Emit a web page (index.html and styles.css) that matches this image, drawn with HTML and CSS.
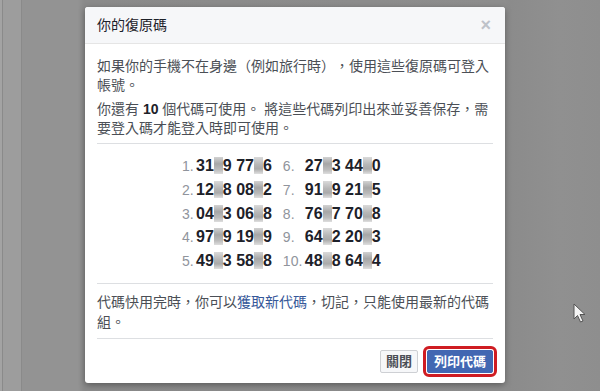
FILE: index.html
```html
<!DOCTYPE html>
<html lang="zh-Hant">
<head>
<meta charset="utf-8">
<link rel="stylesheet" href="styles.css">
</head>
<body>
<div class="dialog">
  <div class="dlg-head">
    <span class="title">你的復原碼</span>
    <span class="close">×</span>
  </div>
  <div class="dlg-body">
    <p class="para">如果你的手機不在身邊（例如旅行時），使用這些復原碼可登入帳號。</p>
    <p class="para p2">你還有 <b>10</b> 個代碼可使用。 將這些代碼列印出來並妥善保存，需要登入碼才能登入時即可使用。</p>
    <div class="codes">
      <div class="col c1">
        <div class="row"><span class="n">1.</span><span class="code">31<i class="m a"></i>9 77<i class="m b"></i>6</span></div>
        <div class="row"><span class="n">2.</span><span class="code">12<i class="m b"></i>8 08<i class="m a"></i>2</span></div>
        <div class="row"><span class="n">3.</span><span class="code">04<i class="m a"></i>3 06<i class="m b"></i>8</span></div>
        <div class="row"><span class="n">4.</span><span class="code">97<i class="m a"></i>9 19<i class="m a"></i>9</span></div>
        <div class="row"><span class="n">5.</span><span class="code">49<i class="m b"></i>3 58<i class="m a"></i>8</span></div>
      </div>
      <div class="col c2">
        <div class="row"><span class="n">6.</span><span class="code">27<i class="m a"></i>3 44<i class="m b"></i>0</span></div>
        <div class="row"><span class="n">7.</span><span class="code">91<i class="m b"></i>9 21<i class="m a"></i>5</span></div>
        <div class="row"><span class="n">8.</span><span class="code">76<i class="m a"></i>7 70<i class="m b"></i>8</span></div>
        <div class="row"><span class="n">9.</span><span class="code">64<i class="m b"></i>2 20<i class="m a"></i>3</span></div>
        <div class="row"><span class="n">10.</span><span class="code">48<i class="m b"></i>8 64<i class="m a"></i>4</span></div>
      </div>
    </div>
    <p class="para p3">代碼快用完時，你可以<a class="link" href="#">獲取新代碼</a>，切記，只能使用最新的代碼組。</p>
  </div>
  <div class="dlg-foot">
    <button class="btn btn-close">關閉</button>
    <button class="btn btn-print">列印代碼</button>
  </div>
</div>
<svg class="cursor" width="14" height="20" viewBox="0 0 14 20">
  <path d="M1 1 L1 16 L4.5 12.5 L7.5 19 L10 18 L7 11.5 L12 11.5 Z" fill="#f4f4f4" stroke="#555" stroke-width="1"/>
</svg>
</body>
</html>
```
FILE: styles.css
```css
html, body {
  margin: 0;
  padding: 0;
}
body {
  width: 600px;
  height: 391px;
  overflow: hidden;
  position: relative;
  font-family: "Liberation Sans", "Noto Sans CJK TC", sans-serif;
  text-spacing-trim: space-all;
  background: linear-gradient(to right,
    #a3a3a3 0px, #a3a3a3 2px,
    #8a8a8a 2px, #8a8a8a 3px,
    #9d9d9d 3px, #9d9d9d 21px,
    #8a8a8a 21px, #8a8a8a 22px,
    #939393 22px, #939393 78px,
    #8a8a8a 84px, #8d8d8d 505px,
    #8b8b8b 510px, #909090 560px, #8e8e8e 600px);
  display: flex;
  align-items: flex-start;
}
.dialog {
  margin: 7px 0 0 85px;
  width: 420px;
  height: 376px;
  background: #fff;
  border-radius: 3px;
  box-shadow: 0 2px 6px rgba(0,0,0,0.35);
  display: flex;
  flex-direction: column;
  overflow: hidden;
}
.dlg-head {
  height: 36px;
  flex: none;
  background: #f6f7f9;
  border-bottom: 1px solid #e5e5e5;
  display: flex;
  align-items: center;
  justify-content: space-between;
  padding: 0 14px 0 12px;
}
.title {
  font-size: 14px;
  color: #1d2129;
  line-height: 19px;
  padding-top: 1px;
}
.close {
  font-size: 18px;
  font-weight: bold;
  color: #bec2c9;
  line-height: 20px;
  font-family: "Liberation Sans", sans-serif;
}
.dlg-body {
  padding: 13px 12px 0 12px;
}
.para {
  margin: 0;
  font-size: 14px;
  line-height: 19px;
  color: #4b4f56;
}
.para b {
  color: #1d2129;
}
.p2 {
  margin-top: 5px;
  padding-bottom: 5px;
  border-bottom: 1px solid #dddfe2;
}
.codes {
  display: flex;
  padding: 10px 0 10px 85px;
  border-bottom: 1px solid #dddfe2;
  gap: 11px;
}
.col {
  display: flex;
  flex-direction: column;
}
.row {
  display: flex;
  align-items: baseline;
  height: 23.75px;
  line-height: 23.75px;
}
.n {
  font-size: 14px;
  color: #90949c;
}
.c1 .n { width: 14px; }
.c2 .n { width: 22px; }
.code {
  font-size: 16px;
  font-weight: bold;
  color: #1d2129;
  white-space: nowrap;
}
.m {
  display: inline-block;
  width: 9px;
  height: 17px;
  vertical-align: -3px;
}
.m.a {
  background: linear-gradient(to bottom, #d2d2d2, #a6a6a6 40%, #bcbcbc 75%, #dedede);
}
.m.b {
  background: linear-gradient(to bottom, #dadada, #b6b6b6 45%, #aaaaaa 70%, #e0e0e0);
}
.p3 {
  margin-top: 8px;
  line-height: 20px;
  padding-bottom: 6px;
  border-bottom: 1px solid #dddfe2;
}
.link {
  color: #365899;
  text-decoration: none;
}
.dlg-foot {
  display: flex;
  justify-content: flex-end;
  gap: 9px;
  padding: 11px 12px 0 12px;
}
.btn {
  font-family: "Liberation Sans", "Noto Sans CJK TC", sans-serif;
  font-size: 13px;
  font-weight: bold;
  height: 23px;
  line-height: 21px;
  border-radius: 2px;
  cursor: pointer;
  padding: 0;
}
.btn-close {
  background: #f6f7f9;
  border: 1px solid #ced0d4;
  color: #4b4f56;
  width: 38px;
}
.btn-print {
  background: #4267b2;
  border: 1px solid #4267b2;
  color: #fff;
  width: 66px;
  outline: 3px solid #cf1c22;
  outline-offset: 1px;
}
.cursor {
  position: absolute;
  left: 573px;
  top: 303px;
}
```
